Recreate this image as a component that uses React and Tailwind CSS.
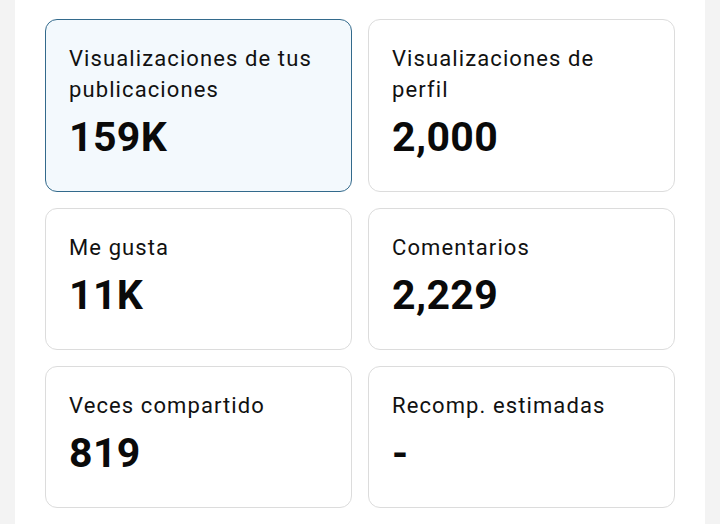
export default function App() {
  const cards = [
    { label: "Visualizaciones de tus publicaciones", value: "159K", active: true },
    { label: "Visualizaciones de perfil", value: "2,000" },
    { label: "Me gusta", value: "11K" },
    { label: "Comentarios", value: "2,229" },
    { label: "Veces compartido", value: "819" },
    { label: "Recomp. estimadas", value: "-" },
  ];
  return (
    <div
      className="w-[720px] h-[524px] bg-[#f3f3f3] overflow-hidden"
      style={{ fontFamily: "Roboto, 'Noto Sans', sans-serif" }}
    >
      <div className="ml-[15px] w-[690px] h-full bg-white px-[30px] pt-[19px]">
        <div className="grid grid-cols-2 gap-x-[16px] gap-y-[16px]">
          {cards.map((c, i) => (
            <div
              key={i}
              className={
                c.active
                  ? "rounded-[12px] border border-[#336a8c] bg-[#f3f9fd] px-[23px] pt-[23px] pb-[30px]"
                  : "rounded-[12px] border border-[#dcdcdc] bg-white px-[23px] pt-[23px] pb-[30px]"
              }
            >
              <div className="text-[22px] leading-[31px] tracking-[0.05em] text-[#111111]">{c.label}</div>
              <div className="mt-[8px] text-[41px] leading-[48px] font-bold tracking-[0.01em] text-[#0a0a0a]">
                {c.value}
              </div>
            </div>
          ))}
        </div>
      </div>
    </div>
  );
}
